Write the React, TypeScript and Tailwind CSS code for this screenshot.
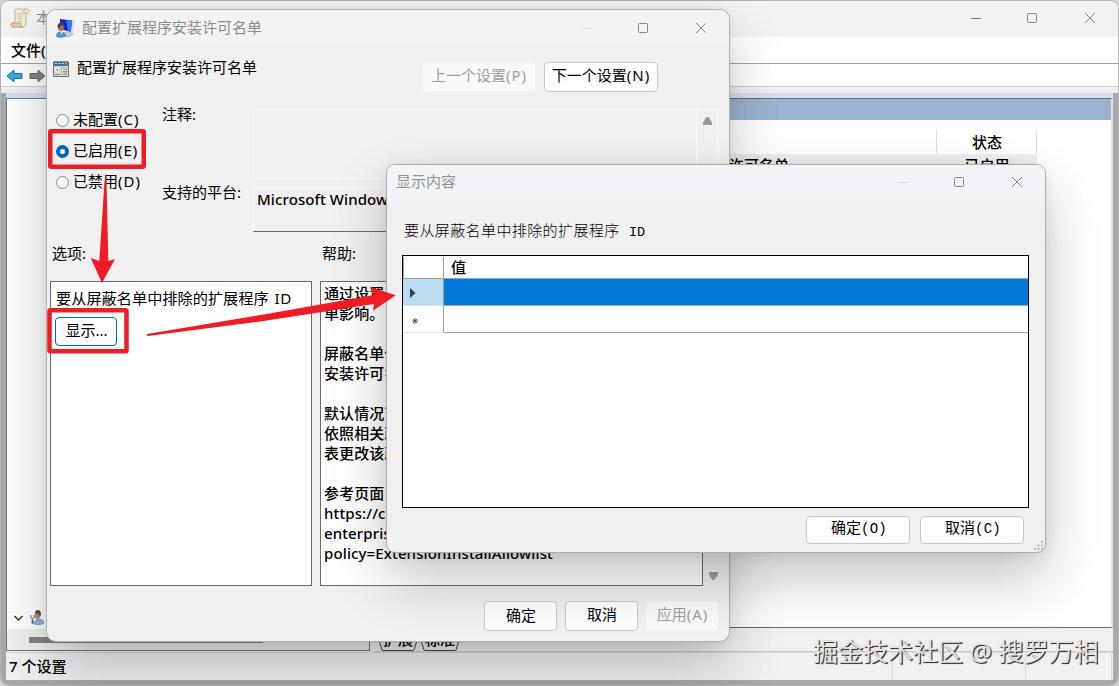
import React from 'react';

const HELP_LINES = [
  '通过设置此',
  '单影响。',
  '',
  '屏蔽名单值',
  '安装许可名',
  '',
  '默认情况下',
  '依照相关政',
  '表更改该政',
  '',
  '参考页面',
  'https://cl',
  'enterprise',
  'policy=ExtensionInstallAllowlist',
];

interface WindowControlsProps {
  minColor: string;
  className?: string;
}

const WindowControls: React.FC<WindowControlsProps> = ({ minColor, className = '' }) => (
  <svg width="130" height="12" viewBox="0 0 130 12" fill="none" className={className}>
    <path d="M0 6.5h10" stroke={minColor} />
    <rect x="56.5" y="1.5" width="9" height="9" rx="1" stroke="#858585" />
    <path d="M114 1l10 10M124 1l-10 10" stroke="#858585" />
  </svg>
);

const ScrollIcon = () => (
  <svg width="20" height="20" viewBox="0 0 20 20" fill="none">
    <path d="M5 4C4.500 2 6 1 7.500 1H17c2.500 0 2.500 4 .5 4H16v10c0 3-1.500 4-3.500 4H3.500c-3 0-3.500-4-1.500-4h3z" fill="#f3ecd2" stroke="#b3a988" strokeWidth=".8" />
    <path d="M2 15h9v2c0 1 1 2 2 2H3.500c-2.500 0-3-3-1.500-4z" fill="#dccfaa" stroke="#a99c76" strokeWidth=".7" />
    <path d="M16 5h-1.500c-1 0-1.500-3 .5-4" stroke="#a99c76" strokeWidth=".8" />
    <path d="M7 5.500h6M7 8h6M7 10.500h5M7 13h5" stroke="#cdbfa5" strokeWidth=".9" />
  </svg>
);

const PolicyUserIcon = () => (
  <svg width="19" height="20" viewBox="0 0 19 20">
    <path d="M4 1l12.500 1.500L15 14 4 11z" fill="#0c28cf" />
    <path d="M10 1.700l6.500.8L15 14l-3-1z" fill="#3d74e8" />
    <path d="M16.500 2.500L19 2l-2 12-2 1z" fill="#dde1e3" />
    <path d="M7 14l9 .5 1.500 2L12 19l-5-1z" fill="#c6cdd3" stroke="#98a2aa" strokeWidth=".5" />
    <ellipse cx="5" cy="9.500" rx="2.800" ry="3.800" fill="#a96f4e" />
    <path d="M1.500 9c-.5-5 6-5.500 6.500-2L4.500 8 3 11z" fill="#4e3f3c" />
    <path d="M0 18.500c0-6 8-7 10.500-.5-3 2-7.500 2.500-10.500.5z" fill="#5796c0" />
    <path d="M4 13l2 3.500L7 13z" fill="#dfedf5" />
  </svg>
);

const SettingIcon = () => (
  <svg width="16" height="16" viewBox="0 0 16 16">
    <path d="M.5 1h15v14.500H.5z" fill="#d9ddd5" stroke="#5f7884" />
    <path d="M1 .5h14V5H1z" fill="#3f6f92" />
    <path d="M2 2.500h2M5.500 2.500h2M9 2.500h2" stroke="#d6e6ee" />
    <path d="M12 1.500h2v2h-2z" fill="#d98a55" />
    <circle cx="4.200" cy="9" r="2.500" fill="#fff" stroke="#c8cabc" strokeWidth=".5" />
    <path d="M4 8v1.500h1" stroke="#4f7656" fill="none" />
    <path d="M8.500 6.500h5v7h-5z" fill="#fff" stroke="#c4ab72" />
    <path d="M10 8.500h3M10 10.500h3M10 12h3" stroke="#6d7d70" />
    <path d="M2 13.500h5" stroke="#6e8c7a" />
  </svg>
);

const AdminIcon = () => (
  <svg width="15" height="15" viewBox="0 0 15 15">
    <path d="M4 14c0-6 9-7 10-1-3 2-6 2-10 1z" fill="#8fb4e2" stroke="#5f83b5" strokeWidth=".6" />
    <ellipse cx="7.500" cy="5" rx="2.800" ry="4" fill="#b98766" />
    <path d="M5 3c0-4 6-4 6 1l-1 3-1-3z" fill="#59483e" />
    <path d="M.8 5v2.500L2.500 9l1.700-1.500V5M2.500 9v5" stroke="#7697ab" strokeWidth="1.200" fill="none" />
    <path d="M2.500 10v3.500" stroke="#2f6f9a" strokeWidth="1.800" />
  </svg>
);

const ToolbarArrow: React.FC<{ fill: string; stroke: string; flip?: boolean }> = ({ fill, stroke, flip }) => (
  <svg width="17" height="14" viewBox="0 0 17 14" className={flip ? 'rotate-180' : ''}>
    <path d="M1 7l7-6v3.500h8v5H8V13z" fill={fill} stroke={stroke} strokeLinejoin="round" />
  </svg>
);

// The access key in brackets is set a little wider than the label itself
const Caption: React.FC<{ text: string }> = ({ text }) => {
  const cut = text.indexOf('(');
  if (cut < 0) return <span>{text}</span>;
  return (
    <span>
      {text.slice(0, cut)}
      <span className="tracking-[1px]">{text.slice(cut)}</span>
    </span>
  );
};

const Radio: React.FC<{ label: string; checked?: boolean }> = ({ label, checked }) => (
  <div className="flex h-[31px] items-center gap-[4px] whitespace-nowrap">
    {checked ? (
      <span className="h-[13px] w-[13px] shrink-0 rounded-full border-[4px] border-[#0067b8] bg-white" />
    ) : (
      <span className="h-[13px] w-[13px] shrink-0 rounded-full border border-[#8b8b8b] bg-[#f5f5f5]" />
    )}
    <span className="pb-[4px]">
      <Caption text={label} />
    </span>
  </div>
);

interface DialogButtonProps {
  label: string;
  className: string;
  disabled?: boolean;
}

const DialogButton: React.FC<DialogButtonProps> = ({ label, className, disabled }) => (
  <button
    disabled={disabled}
    className={`flex shrink-0 items-center justify-center rounded-[4px] border whitespace-nowrap ${
      disabled ? 'border-[#f4f4f4] bg-white/60 text-[#a0a0a0]' : 'border-[#c8c8c8] bg-[#fdfdfd] text-black'
    } ${className}`}
  >
    <Caption text={label} />
  </button>
);

const Tab: React.FC<{ label: string }> = ({ label }) => (
  <div className="flex h-[22px] items-end">
    <svg width="6" height="22" fill="none">
      <path d="M0 5l5 16h1" stroke="#444" />
    </svg>
    <span className="h-[22px] border-b border-[#444] leading-[20px]">{label}</span>
    <svg width="6" height="22" fill="none">
      <path d="M6 5L1 21H0" stroke="#444" />
    </svg>
  </div>
);

const ConsoleWindow = () => (
  <div className="flex h-full w-full flex-col overflow-hidden rounded-[9px] border border-[#b4b4b4] bg-[#f0f0f0]">
    {/* Title bar */}
    <div className="flex h-[36px] shrink-0 items-center bg-[#f2f2f2] pr-[17px] pb-[2px] pl-[9px]">
      <ScrollIcon />
      <span className="ml-[6px] pb-px text-[15px] text-[#888]">本</span>
      <WindowControls minColor="#858585" className="ml-auto" />
    </div>
    <div className="flex h-[27px] shrink-0 items-center border-b border-[#a5a5a5] bg-white pl-[10px] text-[15px] font-medium">
      文件(F)
    </div>
    <div className="flex h-[23px] shrink-0 items-center gap-[6px] border-b border-[#cfcfcf] bg-white pt-[2px] pl-[5px]">
      <ToolbarArrow fill="#36a7e8" stroke="#1975ac" />
      <ToolbarArrow fill="#858585" stroke="#666" flip />
    </div>
    <div className="h-[6px] shrink-0 bg-[#f0f0f0]" />

    <div className="flex min-h-0 flex-1 flex-col border-x-[5px] border-b-[5px] border-[#a8a8a8]">
      <div className="h-[5px] shrink-0 bg-[#d3e1ee]" />
      <div className="flex min-h-0 flex-1">
        {/* Tree pane */}
        <div className="flex h-[553px] w-[364px] shrink-0 flex-col border border-[#777] bg-white">
          <div className="flex flex-1 items-end gap-[7px] pb-[4px] pl-[7px]">
            <svg width="9" height="15" viewBox="0 0 9 15" fill="none">
              <path d="M.5 6l4 4 4-4" stroke="#333" strokeWidth="1.500" />
            </svg>
            <AdminIcon />
          </div>
          <div className="flex h-[21px] items-center bg-[#f0f0f0] pl-[22px]">
            <div className="h-[6px] w-[234px] bg-[#858585]" />
          </div>
        </div>

        {/* Settings list */}
        <div className="ml-[4px] flex h-[553px] min-w-0 flex-1 flex-col">
          <div className="flex h-[530px] shrink-0 flex-col border-t border-r-2 border-b border-t-[#696969] border-r-[#e3e3e3] border-b-[#696969] bg-white">
            <div className="h-[21px] shrink-0 bg-[#99b4d1]" />
            <div className="mt-[10px] flex h-[24px] shrink-0 text-[15px] font-medium">
              <div className="w-[563px] border-r border-[#dedede]" />
              <div className="flex w-[100px] items-center justify-center border-r border-[#dedede] pl-px">状态</div>
            </div>
            <div className="flex h-[22px] w-[663px] shrink-0 items-center bg-[#efefef] pt-px text-[15px] font-medium">
              <span className="w-[563px] pl-[235px]">配置扩展程序安装许可名单</span>
              <span className="w-[100px] text-center">已启用</span>
            </div>
          </div>
          <div className="flex h-[24px] shrink-0 items-end border-b border-[#c9c9c9] pl-[3px] text-[15px] leading-[22px] font-medium">
            <Tab label="扩展" />
            <Tab label="标准" />
          </div>
        </div>
      </div>
      {/* Status bar */}
      <div className="flex h-[28px] shrink-0 items-center border-t border-[#dcdcdc] bg-[#f0f0f0] pr-px text-[15px] font-medium">
        <span className="pl-[3px]">7 个设置</span>
        <div className="ml-auto flex h-full">
          <div className="w-[134px] border-x border-[#dadada]" />
          <div className="w-[86px] border-r border-[#dadada]" />
        </div>
      </div>
    </div>
  </div>
);

const PolicyDialog = () => (
  <div className="absolute top-[10px] left-[47px] h-[631px] w-[682px] rounded-[9px] bg-[#f0f0f0] text-[15px] leading-[20px] text-black shadow-[0_0_0_1px_#b0b0b0,0_26px_56px_rgba(0,0,0,0.23),0_2px_12px_rgba(0,0,0,0.08)]">
    <div className="flex h-[35px] items-center rounded-t-[9px] bg-[#f3f3f3] pr-[17px] pl-[9px]">
      <PolicyUserIcon />
      <span className="ml-[7px] pb-[2px] text-[#8c8c8c]">配置扩展程序安装许可名单</span>
      <WindowControls minColor="#dcdcdc" className="ml-auto" />
    </div>

    <div className="flex h-[53px] pt-[7px] pl-[6px]">
      <div className="mt-[9px]">
        <SettingIcon />
      </div>
      <span className="mt-[5px] ml-[8px] w-[345px]">配置扩展程序安装许可名单</span>
      <DialogButton label="上一个设置(P)" className="mt-[10px] h-[30px] w-[114px] pb-[4px]" disabled />
      <DialogButton label="下一个设置(N)" className="mt-[10px] ml-[8px] h-[30px] w-[114px] pb-[4px]" />
    </div>

    {/* State, comment and supported platforms */}
    <div className="flex h-[134px]">
      <div className="w-[115px] shrink-0 pt-[7px] pl-[9px]">
        <Radio label="未配置(C)" />
        <Radio label="已启用(E)" checked />
        <Radio label="已禁用(D)" />
      </div>
      <div className="w-[91px] shrink-0 pt-[6px]">
        <div className="h-[78px]">注释:</div>
        <div>支持的平台:</div>
      </div>
      <div className="w-[466px] pt-[11px]">
        <div className="flex h-[70px] justify-end border border-[#fbfbfb]">
          <div className="flex w-[22px] justify-center border-l border-[#fbfbfb] pt-[7px]">
            <svg width="11" height="9">
              <path d="M4.500 0h2L10 5.500V8H1V5.500z" fill="#9a9a9a" />
            </svg>
          </div>
        </div>
        <div className="mt-[8px] h-[45px] border border-[#fbfbfb] border-b-[#696969] pt-px pl-[3px] font-medium tracking-[0.1px]">
          Microsoft Windows
        </div>
      </div>
    </div>

    <div className="flex h-[49px] pt-[11px] pl-[5px]">
      <span className="w-[270px]">选项:</span>
      <span>帮助:</span>
    </div>

    <div className="flex h-[305px] pl-[3px]">
      <div className="w-[262px] border border-[#696969] bg-white pt-[6px] pl-[4px]">
        <div className="pl-px text-[15.200px]">
          要从屏蔽名单中排除的扩展程序 <span className="ml-[2px] tracking-[0.5px]">ID</span>
        </div>
        <button className="mt-[9px] flex h-[29px] w-[62px] items-center justify-center rounded-[4px] border border-[#0067b8] bg-[#fdfdfd] pb-[3px] pl-px">
          显示...
        </button>
      </div>
      <div className="ml-[8px] w-[383px] border border-[#696969] bg-white pt-px pl-[3px] font-medium">
        {HELP_LINES.map((line, i) => (
          <div key={i} className="h-[20px] tracking-[0.12px] whitespace-nowrap">{line}</div>
        ))}
      </div>
      <div className="flex w-[20px] items-end justify-center pb-[5px]">
        <svg width="11" height="9">
          <path d="M1 0h9v2.500L6.500 8h-2L1 2.500z" fill="#9a9a9a" />
        </svg>
      </div>
    </div>

    <div className="flex justify-end gap-[8px] pt-[15px] pr-[10px]">
      <DialogButton label="确定" className="h-[30px] w-[73px] pb-[2px] pl-px" />
      <DialogButton label="取消" className="h-[30px] w-[73px] pb-[4px] pl-px" />
      <DialogButton label="应用(A)" className="h-[30px] w-[73px] pb-[4px]" disabled />
    </div>
  </div>
);

const AccessButton: React.FC<{ label: string; accessKey: string }> = ({ label, accessKey }) => (
  <button className="flex h-[28px] w-[104px] items-center justify-center rounded-[4px] border border-[#c8c8c8] bg-[#fdfdfd] pb-px pl-[2px]">
    <span>
      {label}
      <span className="text-[14px] tracking-[0.3px]">{accessKey}</span>
    </span>
  </button>
);

const ContentDialog = () => (
  <div className="absolute top-[164px] left-[386px] flex h-[389px] w-[660px] flex-col rounded-[9px] border border-[#adadad] bg-[#f0f0f0] text-[15px] leading-[20px] text-black shadow-[0_26px_56px_rgba(0,0,0,0.23),0_2px_14px_rgba(0,0,0,0.08)]">
    <div className="flex h-[35px] shrink-0 items-center rounded-t-[8px] bg-[#f2f4f7] pr-[17px] pb-[2px] pl-[9px]">
      <span className="pb-[2px] text-[#929292]">显示内容</span>
      <WindowControls minColor="#d5d7da" className="ml-auto" />
    </div>
    <div className="mt-[23px] mb-[12px] pl-[17px] font-['Liberation_Mono','Noto_Sans_CJK_SC',monospace] text-[15px] font-light tracking-[0.4px]">
      要从屏蔽名单中排除的扩展程序 <span className="text-[13.500px] tracking-normal">ID</span>
    </div>

    {/* Value grid */}
    <div className="ml-[15px] h-[253px] w-[627px] border border-black bg-white pt-px">
      <div className="flex h-[22px] border-b border-[#a0a0a0]">
        <div className="w-[41px] border-x border-[#a0a0a0]" />
        <div className="flex items-center pb-[2px] pl-[7px] font-medium">值</div>
      </div>
      <div className="flex h-[27px]">
        <div className="flex w-[41px] items-center border-r border-b border-r-[#a0a0a0] border-b-[#e3e3e3] bg-[#b9dcf3] pt-[2px] pl-[7px]">
          <svg width="6" height="10">
            <path d="M0 0l5.500 5L0 10z" fill="#3c3c3c" />
          </svg>
        </div>
        <div className="flex-1 border-b border-[#a0a0a0] bg-[#0078d7]" />
      </div>
      <div className="flex h-[27px]">
        <div className="flex w-[41px] items-center border-r border-b border-r-[#a0a0a0] border-b-[#e3e3e3] pt-[3px] pl-[9px]">
          <svg width="6" height="6" stroke="#555">
            <path d="M3 0v6M0 3h6M1 1l4 4M5 1L1 5" />
          </svg>
        </div>
        <div className="flex-1 border-b border-[#a0a0a0]" />
      </div>
    </div>

    <div className="mt-[8px] flex justify-end gap-[10px] pr-[21px] font-['Liberation_Mono','Noto_Sans_CJK_SC',monospace] text-[15px]">
      <AccessButton label="确定" accessKey="(O)" />
      <AccessButton label="取消" accessKey="(C)" />
    </div>
    <svg width="10" height="10" className="absolute right-px bottom-px" fill="#b5b5b5">
      <path d="M7 0h2v2H7zM7 3.500h2v2H7zM3.500 3.500h2v2h-2zM0 7h2v2H0zM3.500 7h2v2h-2zM7 7h2v2H7z" />
    </svg>
  </div>
);

// Red boxes and arrows drawn over the windows
const Annotations = () => (
  <svg className="pointer-events-none absolute inset-0" width="1119" height="686" viewBox="0 0 1119 686" fill="none">
    <rect x="50.250" y="131.250" width="93.500" height="35.500" rx="1" stroke="#ee1c25" strokeWidth="4.500" />
    <rect x="49.500" y="310.250" width="77" height="41" rx="1" stroke="#ee1c25" strokeWidth="4.500" />
    <path d="M104.500 181q1-2 2 0L108.300 261l6.700-2L102 283 90.700 258l8.600 3z" fill="#ee1c25" />
    <path d="M147 334l119.700-20 107-19-3.700-8.300 25.700 8.600L373 310.700l1-6.700-107 16.500L148 336q-2 0-1-2z" fill="#ee1c25" />
  </svg>
);

export default function App() {
  return (
    <div className="relative h-[686px] w-[1119px] overflow-hidden bg-[#d4d4d4] font-['Noto_Sans','Noto_Sans_CJK_SC',sans-serif] text-black">
      <ConsoleWindow />
      <PolicyDialog />
      <ContentDialog />
      <Annotations />
      <div className="absolute top-[632px] left-[813px] text-[25px] leading-[38px] whitespace-nowrap text-[#e4e4e4] [text-shadow:1px_1px_0_#333,1px_1px_1px_#555]">
        掘金技术社区 @ 搜罗万相
      </div>
    </div>
  );
}
